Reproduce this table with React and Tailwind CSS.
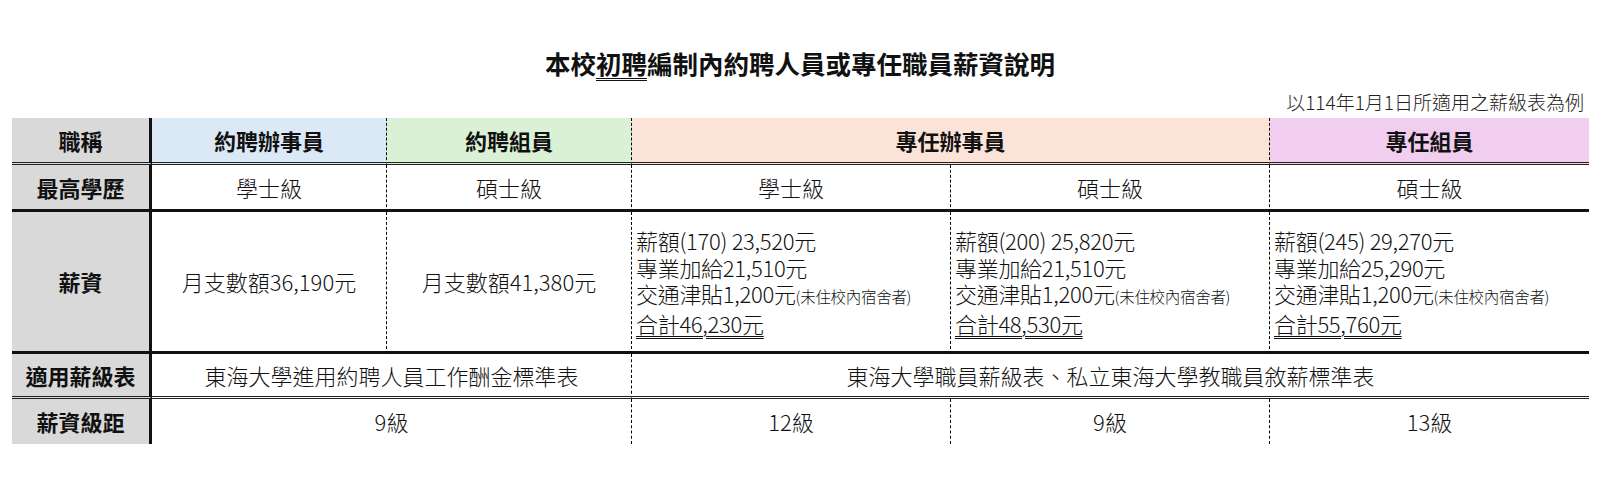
import React from "react";

const font = { fontFamily: '"Noto Sans CJK TC", "Noto Sans", sans-serif' };

function Salary({ base, pro, total }) {
  return (
    <div className="flex flex-col justify-center items-start pl-[4px] text-[22px] leading-[26.5px] tracking-[-0.3px]">
      <div>{base}</div>
      <div>{pro}</div>
      <div>
        交通津貼1,200元<span className="text-[15.5px]">(未住校內宿舍者)</span>
      </div>
      <div className="underline decoration-double decoration-1 underline-offset-[3px]">{total}</div>
    </div>
  );
}

export default function App() {
  const dash = "border-r [border-right-style:dashed] border-r-black";
  const lab = "bg-[#d9d9d9] border-r-[3px] [border-right-style:solid] border-r-[#111] flex items-center justify-center font-bold text-[22px]";
  const c = "flex items-center justify-center text-[22px] font-light";
  const b1 = "border-b-[3px] [border-bottom-style:double] border-b-[#222]";
  const b2 = "border-b-[3px] [border-bottom-style:solid] border-b-[#111]";
  return (
    <div className="w-[1600px] h-[477px] bg-white text-[#111]" style={font}>
      <div className="pt-[46px] text-center text-[25.5px] font-bold leading-[34px]">
        本校<span className="underline decoration-double decoration-1 underline-offset-[4px]">初聘</span>編制內約聘人員或專任職員薪資說明
      </div>
      <div className="mt-[10px] pr-[16px] text-right text-[19px] leading-[24px] text-[#222] font-light">
        以114年1月1日所適用之薪級表為例
      </div>
      <div className="ml-[12px] mt-[4px] grid grid-cols-[140px_235px_245px_319px_319px_319px] grid-rows-[47px_47px_142px_45px_45px] w-[1577px]">
        {/* row 1 */}
        <div className={`${lab} ${b1}`}>職稱</div>
        <div className={`${c} !font-bold bg-[#dbe9f7] ${dash} ${b1}`}>約聘辦事員</div>
        <div className={`${c} !font-bold bg-[#dbf1d5] ${dash} ${b1}`}>約聘組員</div>
        <div className={`${c} !font-bold bg-[#fce3d7] col-span-2 ${dash} ${b1}`}>專任辦事員</div>
        <div className={`${c} !font-bold bg-[#f1ceef] ${b1}`}>專任組員</div>
        {/* row 2 */}
        <div className={`${lab} ${b2}`}>最高學歷</div>
        <div className={`${c} ${dash} ${b2}`}>學士級</div>
        <div className={`${c} ${dash} ${b2}`}>碩士級</div>
        <div className={`${c} ${dash} ${b2}`}>學士級</div>
        <div className={`${c} ${dash} ${b2}`}>碩士級</div>
        <div className={`${c} ${b2}`}>碩士級</div>
        {/* row 3 */}
        <div className={`${lab} ${b2}`}>薪資</div>
        <div className={`${c} ${dash} ${b2}`}>月支數額36,190元</div>
        <div className={`${c} ${dash} ${b2}`}>月支數額41,380元</div>
        <div className={`flex font-light ${dash} ${b2}`}>
          <Salary base="薪額(170) 23,520元" pro="專業加給21,510元" total="合計46,230元" />
        </div>
        <div className={`flex font-light ${dash} ${b2}`}>
          <Salary base="薪額(200) 25,820元" pro="專業加給21,510元" total="合計48,530元" />
        </div>
        <div className={`flex font-light ${b2}`}>
          <Salary base="薪額(245) 29,270元" pro="專業加給25,290元" total="合計55,760元" />
        </div>
        {/* row 4 */}
        <div className={`${lab} ${b1}`}>適用薪級表</div>
        <div className={`${c} col-span-2 ${dash} ${b1}`}>東海大學進用約聘人員工作酬金標準表</div>
        <div className={`${c} col-span-3 ${b1}`}>東海大學職員薪級表、私立東海大學教職員敘薪標準表</div>
        {/* row 5 */}
        <div className={`${lab}`}>薪資級距</div>
        <div className={`${c} col-span-2 ${dash}`}>9級</div>
        <div className={`${c} ${dash}`}>12級</div>
        <div className={`${c} ${dash}`}>9級</div>
        <div className={`${c}`}>13級</div>
      </div>
    </div>
  );
}
